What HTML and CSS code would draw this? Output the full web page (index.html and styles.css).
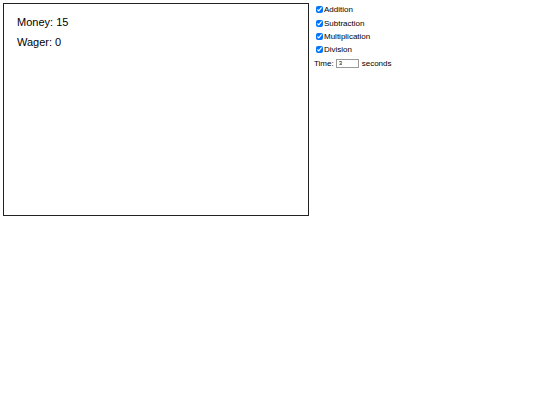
FILE: index.html
```html
<!DOCTYPE html>
<html>
<head>
<meta charset="utf-8">
<link rel="stylesheet" href="styles.css">
</head>
<body>
<div class="page">
  <div class="game">
    <p class="stat">Money: 15</p>
    <p class="stat">Wager: 0</p>
  </div>
  <div class="options">
    <label class="opt"><input type="checkbox" checked>Addition</label>
    <label class="opt"><input type="checkbox" checked>Subtraction</label>
    <label class="opt"><input type="checkbox" checked>Multiplication</label>
    <label class="opt"><input type="checkbox" checked>Division</label>
    <div class="time"><span>Time:</span><input class="secs" type="text" value="3"><span>seconds</span></div>
  </div>
</div>
</body>
</html>
```
FILE: styles.css
```css
html, body { margin: 0; padding: 0; background: #fff; }
body { font-family: "Liberation Sans", Arial, sans-serif; color: #000; }
.page { display: flex; align-items: flex-start; padding: 3px; gap: 5px; }
.game {
  border: 1px solid #222;
  padding: 12px 0 0 13px;
  box-sizing: border-box;
  width: 306px;
  height: 213px;
}
.stat { margin: 0 0 8px 0; font-size: 11px; line-height: 12px; }
.options { display: flex; flex-direction: column; font-size: 8px; }
.opt { display: flex; align-items: center; height: 13.4px; }
.opt input { width: 7px; height: 7px; margin: 0 1px 0 2px; }
.time { display: flex; align-items: center; height: 13.4px; font-size: 8px; }
.secs { width: 23px; height: 9px; box-sizing: border-box; font-size: 6px; padding: 0 2px; margin: 0 3px 0 2px; border: 1px solid #999; font-family: inherit; }
```
